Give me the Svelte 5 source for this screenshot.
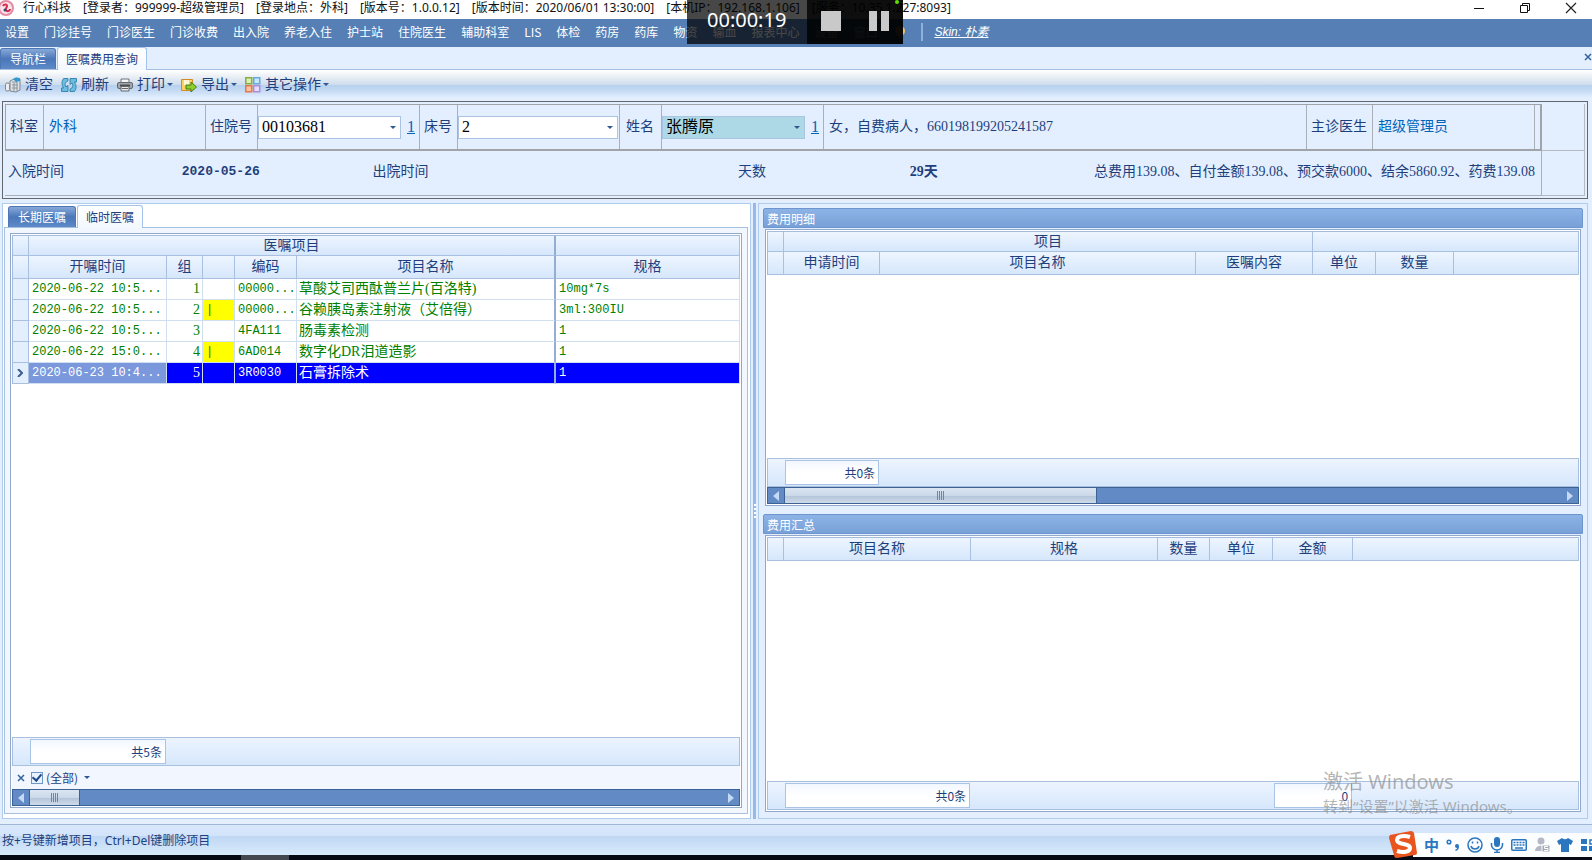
<script lang="ts">
  const windowInfo = [
    '[登录者：999999-超级管理员]',
    '[登录地点：外科]',
    '[版本号：1.0.0.12]',
    '[版本时间：2020/06/01 13:30:00]',
    '[本机IP：192.168.1.106]',
    '[服务：10.35.1.227:8093]',
  ];

  const menu = [
    '设置', '门诊挂号', '门诊医生', '门诊收费', '出入院', '养老入住', '护士站', '住院医生', '辅助科室',
    'LIS', '体检', '药房', '药库', '物资', '输血', '报表中心', '设备', '窗口',
  ];

  const tools = [
    { icon: 'clear', label: '清空', drop: false },
    { icon: 'refresh', label: '刷新', drop: false },
    { icon: 'print', label: '打印', drop: true },
    { icon: 'export', label: '导出', drop: true },
    { icon: 'more', label: '其它操作', drop: true },
  ];

  const orders = [
    { time: '2020-06-22 10:5...', group: 1, mark: '', code: '00000...', name: '草酸艾司西酞普兰片(百洛特)', spec: '10mg*7s' },
    { time: '2020-06-22 10:5...', group: 2, mark: '|', code: '00000...', name: '谷赖胰岛素注射液（艾倍得）', spec: '3ml:300IU' },
    { time: '2020-06-22 10:5...', group: 3, mark: '', code: '4FA111', name: '肠毒素检测', spec: '1' },
    { time: '2020-06-22 15:0...', group: 4, mark: '|', code: '6AD014', name: '数字化DR泪道造影', spec: '1' },
    { time: '2020-06-23 10:4...', group: 5, mark: '', code: '3R0030', name: '石膏拆除术', spec: '1' },
  ];

  let selected = $state(5);
  let filterOn = $state(true);
</script>

{#snippet scrollbar(thumb: number)}
  <div class="scrollbar">
    <button type="button" aria-label="向左滚动">
      <svg width="6" height="10" viewBox="0 0 6 10"><path d="M6 0v10L0 5z" fill="#c4daf6" /></svg>
    </button>
    <div class="track">
      <div class="thumb" style:width="{thumb}%"><i></i></div>
    </div>
    <button type="button" aria-label="向右滚动">
      <svg width="6" height="10" viewBox="0 0 6 10"><path d="M0 0v10L6 5z" fill="#c4daf6" /></svg>
    </button>
  </div>
{/snippet}

<div class="window">
  <header class="titlebar">
    <svg class="logo" width="14" height="16" viewBox="0 0 14 16">
      <circle cx="6" cy="8" r="7" fill="#fbe3ea" stroke="#e48ba5" stroke-width="2" />
      <path d="M3 6c1-2 4-2 4 0s-2 2-1 4 4 1 4-1" fill="none" stroke="#d32f4d" stroke-width="2" />
      <circle cx="5" cy="10" r="1.500" fill="#35477d" />
    </svg>
    <span>行心科技</span>
    {#each windowInfo as info}
      <span>{info}</span>
    {/each}
    <div class="window-buttons">
      <button type="button" aria-label="最小化">
        <svg width="12" height="12" viewBox="0 0 12 12"><path d="M1 6.500h10" stroke="#111" /></svg>
      </button>
      <button type="button" aria-label="还原">
        <svg width="12" height="12" viewBox="0 0 12 12"><path d="M1.500 3.500h7v7h-7zM3.500 3v-1.500h7v7h-1.500" fill="none" stroke="#111" /></svg>
      </button>
      <button type="button" aria-label="关闭">
        <svg width="12" height="12" viewBox="0 0 12 12"><path d="M1 1l10 10M11 1L1 11" stroke="#222" stroke-width="1.200" /></svg>
      </button>
    </div>
  </header>

  <nav class="menubar">
    {#each menu as item}
      <button type="button">{item}</button>
    {/each}
    <svg class="bulb" width="16" height="16" viewBox="0 0 16 16">
      <circle cx="8" cy="7" r="5" fill="#f7c65c" />
      <path d="M6 12h4v3H6z" fill="#8a93a5" />
    </svg>
    <span class="sep"></span>
    <a class="skin" href="#skin">Skin: 朴素</a>
  </nav>

  <div class="tabs main-tabs">
    <button type="button" class="tab">导航栏</button>
    <button type="button" class="tab active">医嘱费用查询</button>
    <button type="button" class="close" aria-label="关闭页签">
      <svg width="8" height="8" viewBox="0 0 8 8"><path d="M1 1l6 6M7 1L1 7" stroke="#33639f" stroke-width="1.500" /></svg>
    </button>
  </div>

  <div class="toolbar">
    {#each tools as tool}
      <button type="button">
        <svg width="16" height="16" viewBox="0 0 16 16">
          {#if tool.icon === 'clear'}
            <path d="M5 4l6-3 4 1v11l-4 2-6-1z" fill="#dce1e6" stroke="#7d858d" />
            <path d="M7 5h5v9M9 6v8M7 8h6M7 11h6" fill="none" stroke="#8c949c" />
            <path d="M8 2l3-1.500L15 1v3l-4 1z" fill="#2f9bd0" />
            <rect x="0.500" y="6" width="4" height="8" rx="1.500" fill="#eee" stroke="#80858a" />
          {:else if tool.icon === 'refresh'}
            <path d="M7 1.500H2.500C.5 4 .5 8 2.500 11H.5v3.500h6.500V8.500L5 10C3.500 7.500 4 5 7 4z" fill="#6cbde2" stroke="#23759f" stroke-width=".8" />
            <path d="M9 14.500h4.500c2-2.500 2-6.500 0-9.500h2V1.500H9v6L11 6c1.500 2.500 1 5-2 6z" fill="#6cbde2" stroke="#23759f" stroke-width=".8" />
          {:else if tool.icon === 'print'}
            <path d="M4 6V2h8v4" fill="#f5f5f5" stroke="#70757a" />
            <rect x=".5" y="5.500" width="15" height="6" rx="1.500" fill="#a3a8ad" stroke="#65696e" />
            <path d="M3 8.500h10" stroke="#4c5055" stroke-width="2" />
            <path d="M4 9.500h8V14H4z" fill="#e8e8e8" stroke="#65696e" />
            <path d="M5 11.500h6" stroke="#65696e" />
          {:else if tool.icon === 'export'}
            <path d="M.5 2.500h11v11H.5z" fill="#fbd264" stroke="#d68b22" />
            <path d="M3 3v5h5V3z" fill="#fff6d6" />
            <path d="M5 8h5V5l5.500 5-5.500 5v-3H5z" fill="#8fce2c" stroke="#3f7f12" />
          {:else}
            <rect x=".75" y=".75" width="6" height="6" fill="#dcefb0" stroke="#86ad48" stroke-width="1.500" />
            <rect x="8.750" y=".75" width="6" height="6" fill="#c9e8fd" stroke="#67a9dd" stroke-width="1.500" />
            <rect x=".75" y="8.750" width="6" height="6" fill="#ffc3a2" stroke="#e47849" stroke-width="1.500" />
            <rect x="8.750" y="8.750" width="6" height="6" fill="#e8dcfb" stroke="#a98fdc" stroke-width="1.500" />
          {/if}
        </svg>
        <span>{tool.label}</span>
        {#if tool.drop}<i class="caret"></i>{/if}
      </button>
    {/each}
  </div>

  <section class="patient">
    <div class="line first">
      <div class="fields">
        <span class="name">科室</span>
        <span class="value link">外科</span>
        <label class="name" for="admission">住院号</label>
        <div class="value edit">
          <div class="combo">
            <select id="admission"><option>00103681</option></select>
            <i class="caret"></i>
          </div>
          <a href="#admission">1</a>
        </div>
        <label class="name" for="bed">床号</label>
        <div class="value edit full">
          <div class="combo">
            <select id="bed"><option>2</option></select>
            <i class="caret"></i>
          </div>
        </div>
        <label class="name roomy" for="patient">姓名</label>
        <div class="value edit">
          <div class="combo current">
            <select id="patient"><option>张腾原</option></select>
            <i class="caret"></i>
          </div>
          <a href="#patient">1</a>
        </div>
        <span class="value grow">女，自费病人，660198199205241587</span>
        <span class="name">主诊医生</span>
        <span class="value link">超级管理员</span>
      </div>
      <div class="tail"></div>
    </div>
    <div class="line">
      <div class="stay">
        <span>入院时间</span>
        <b class="date">2020-05-26</b>
        <span>出院时间</span>
        <span>天数</span>
        <b>29天</b>
        <span class="total">总费用139.08、自付金额139.08、预交款6000、结余5860.92、药费139.08</span>
      </div>
      <div class="tail"></div>
    </div>
  </section>

  <main>
    <section class="orders">
      <div class="tabs">
        <button type="button" class="tab">长期医嘱</button>
        <button type="button" class="tab active">临时医嘱</button>
      </div>
      <div class="page">
        <div class="grid">
          <table>
            <colgroup>
              <col class="w-ind" /><col class="w-time" /><col class="w-group" /><col class="w-mark" /><col class="w-code" /><col class="w-name" /><col />
            </colgroup>
            <thead>
              <tr class="band"><th></th><th colspan="5" class="fixed">医嘱项目</th><th></th></tr>
              <tr><th></th><th>开嘱时间</th><th>组</th><th></th><th>编码</th><th class="fixed">项目名称</th><th>规格</th></tr>
            </thead>
            <tbody>
              {#each orders as row (row.group)}
                <tr class:selected={selected === row.group} onclick={() => (selected = row.group)}>
                  <td class="ind">
                    {#if selected === row.group}
                      <svg width="6" height="8" viewBox="0 0 6 8"><path d="M1 0l4 4-4 4" fill="none" stroke="#3b5f92" stroke-width="2" /></svg>
                    {/if}
                  </td>
                  <td class="code time">{row.time}</td>
                  <td class="num">{row.group}</td>
                  <td class="code" class:yellow={row.mark}>{row.mark}</td>
                  <td class="code">{row.code}</td>
                  <td class="fixed">{row.name}</td>
                  <td class="code">{row.spec}</td>
                </tr>
              {/each}
            </tbody>
          </table>
          <div class="blank"></div>
          <div class="footer">
            <span class="sum s-time">共5条</span>
          </div>
          <div class="filter">
            <button type="button" aria-label="清除筛选">
              <svg width="8" height="8" viewBox="0 0 8 8"><path d="M1 1l6 6M7 1L1 7" stroke="#33639f" stroke-width="1.500" /></svg>
            </button>
            <label><input type="checkbox" bind:checked={filterOn} />(全部)</label>
            <i class="caret"></i>
          </div>
          {@render scrollbar(7.4)}
        </div>
      </div>
    </section>

    <div class="splitter"><i></i><i></i><i></i><i></i></div>

    <section class="fees">
      <div class="group">
        <h2>费用明细</h2>
        <div class="grid">
          <table>
            <colgroup>
              <col class="w-ind" /><col class="w-apply" /><col class="w-item" /><col class="w-content" /><col class="w-unit" /><col class="w-qty" /><col />
            </colgroup>
            <thead>
              <tr class="band"><th></th><th colspan="3">项目</th><th colspan="3"></th></tr>
              <tr><th></th><th>申请时间</th><th>项目名称</th><th>医嘱内容</th><th>单位</th><th>数量</th><th></th></tr>
            </thead>
          </table>
          <div class="blank"></div>
          <div class="footer">
            <span class="sum s-apply">共0条</span>
          </div>
          {@render scrollbar(40.2)}
        </div>
      </div>
      <div class="group">
        <h2>费用汇总</h2>
        <div class="grid">
          <table>
            <colgroup>
              <col class="w-ind" /><col class="w-sum" /><col class="w-sum" /><col class="w-num" /><col class="w-unit" /><col class="w-money" /><col />
            </colgroup>
            <thead>
              <tr><th></th><th>项目名称</th><th>规格</th><th>数量</th><th>单位</th><th>金额</th><th></th></tr>
            </thead>
          </table>
          <div class="blank"></div>
          <div class="footer">
            <span class="sum s-name">共0条</span>
            <span class="s-skip"></span>
            <span class="sum s-money">0</span>
          </div>
        </div>
      </div>
    </section>
  </main>

  <footer class="statusbar">按+号键新增项目，Ctrl+Del键删除项目</footer>
  <div class="taskbar"><i></i></div>

  <div class="recorder">
    <span class="clock">00:00:19</span>
    <button type="button" aria-label="停止"><i class="stop"></i></button>
    <button type="button" aria-label="暂停"><i class="pause"></i></button>
    <i class="live"></i>
  </div>

  <div class="watermark">
    <p class="big">激活 Windows</p>
    <p>转到“设置”以激活 Windows。</p>
  </div>

  <div class="ime">
    <svg class="sogou" width="28" height="28" viewBox="0 0 28 28">
      <path d="M1 5L22 1q2 0 3 2l3 20q0 2-2 2L8 28q-3 0-3-3L0 8q0-2 1-3z" fill="#e9551f" />
      <path d="M21 7C15 5 8 6 8 10c0 5 13 3 13 8 0 4-7 5-13 3" fill="none" stroke="#fff" stroke-width="4" />
    </svg>
    <span class="lang">中</span>
    <svg width="14" height="16" viewBox="0 0 14 16">
      <circle cx="3" cy="5" r="1.800" fill="none" stroke="#2a76bf" stroke-width="1.500" />
      <path d="M11 7a2 2 0 0 1 2 2c0 3-1 4-3 5l-1-1c1-.5 2-1 2-2a2 2 0 0 1 0-4z" fill="#2a76bf" />
    </svg>
    <svg width="16" height="16" viewBox="0 0 16 16">
      <circle cx="8" cy="8" r="7" fill="none" stroke="#2a76bf" stroke-width="1.500" />
      <path d="M4 9c1 4 7 4 8 0M5.500 4.500v2M10.500 4.500v2" fill="none" stroke="#2a76bf" stroke-width="1.500" />
    </svg>
    <svg width="14" height="16" viewBox="0 0 14 16">
      <rect x="4" y="0" width="6" height="10" rx="3" fill="#2a76bf" />
      <path d="M1.500 6v2a5.500 5 0 0 0 11 0V6M7 13v2.500M4 15.500h6" fill="none" stroke="#2a76bf" stroke-width="1.500" />
    </svg>
    <svg width="16" height="14" viewBox="0 0 16 14">
      <rect x=".75" y="1.750" width="14.500" height="10.500" rx="1" fill="none" stroke="#2a76bf" stroke-width="1.500" />
      <path d="M2.500 4.500h11M2.500 7h11" stroke="#2a76bf" stroke-width="1.500" stroke-dasharray="2 1" />
      <path d="M4 10h8" stroke="#2a76bf" stroke-width="1.500" />
    </svg>
    <svg width="16" height="16" viewBox="0 0 16 16">
      <circle cx="7" cy="4" r="3.500" fill="#b5b9c6" />
      <path d="M1 14c0-7 12-7 12 0z" fill="#b5b9c6" />
      <rect x="8" y="8" width="8" height="7" fill="#a5a9b8" stroke="#fff" />
      <path d="M14 9.500h-3.500v2H14v2h-4" fill="none" stroke="#fff" />
    </svg>
    <svg width="16" height="16" viewBox="0 0 16 16">
      <path d="M5 1q3 2.500 6 0l5 3-2 4-2-1v8H4V7L2 8 0 4z" fill="#2a76bf" />
    </svg>
    <svg width="16" height="16" viewBox="0 0 16 16">
      <path d="M1 2h6v5H1zM1 9h6v5H1zM9 9h6v5H9z" fill="#2a76bf" />
      <path d="M10 3h5v4h-5z" fill="none" stroke="#2a76bf" stroke-width="1.500" />
    </svg>
  </div>
</div>

<style>
  :global(body) {
    margin: 0;
    background: #e3efff;
  }

  .window {
    position: relative;
    display: flex;
    flex-direction: column;
    min-height: 100vh;
    overflow: hidden;
    background: #e3efff;
    color: #1e3f7c;
    font-family: 'Liberation Serif', 'Noto Sans CJK SC', serif;
    font-size: 14px;
    line-height: 20px;
    white-space: nowrap;
  }

  .window * {
    box-sizing: border-box;
  }

  button {
    display: flex;
    align-items: center;
    padding: 0;
    border: 0;
    background: none;
    color: inherit;
    font: inherit;
  }

  svg {
    flex: none;
    display: block;
  }

  .caret {
    flex: none;
    width: 0;
    height: 0;
    border: 3px solid transparent;
    border-top-color: #2f5792;
    border-bottom: 0;
  }

  .titlebar,
  .menubar,
  .tabs,
  .statusbar,
  h2,
  .sum,
  .filter {
    font-family: 'Noto Sans CJK SC', sans-serif;
    font-size: 12px;
  }

  .titlebar,
  .statusbar {
    font-family: 'Noto Sans', 'Noto Sans CJK SC', sans-serif;
  }

  .titlebar {
    display: flex;
    align-items: center;
    gap: 12px;
    height: 19px;
    padding-bottom: 3px;
    background: #fff;
    color: #111;
  }

  .logo {
    margin-right: -3px;
  }

  .window-buttons {
    display: flex;
    gap: 34px;
    margin-left: auto;
    padding-right: 15px;
  }

  .menubar {
    display: flex;
    align-items: center;
    gap: 15px;
    height: 28px;
    padding: 0 5px 2px;
    background: #557fb5;
    color: #fff;
  }

  .sep {
    width: 2px;
    height: 18px;
    margin-left: -2px;
    background: #8fb0da;
  }

  .skin {
    margin-left: -4px;
    color: #fff;
    font-family: 'Liberation Sans', 'Noto Sans CJK SC', sans-serif;
    font-style: italic;
  }

  .tabs {
    display: flex;
    align-items: flex-end;
    gap: 1px;
    border-bottom: 1px solid #a5bfe0;
  }

  .tab {
    height: 21px;
    padding: 0 9px;
    border: 1px solid #4d77b4;
    border-bottom: 0;
    border-radius: 3px 3px 0 0;
    background: linear-gradient(#86a9d9, #4b76b8 50%, #5f8ac8);
    color: #fff;
  }

  .tab.active {
    height: 23px;
    margin-bottom: -1px;
    padding: 0 8px;
    border-color: #a5c3ea;
    background: linear-gradient(#fff, #f3f8ff);
    color: #1e3f7c;
  }

  .main-tabs {
    height: 23px;
  }

  .main-tabs .close {
    margin-left: auto;
    padding-bottom: 8px;
  }

  .toolbar {
    display: flex;
    align-items: center;
    gap: 8px;
    height: 28px;
    padding: 1px 5px 0;
    background: linear-gradient(#fff, #eef2f6 20%, #cddcec 53%, #b6d0ee 54%, #c6dbf3 75%, #e3efff);
  }

  .toolbar button {
    gap: 4px;
  }

  .toolbar .caret {
    margin-left: -2px;
  }

  .patient {
    margin: 3px 4px 4px 2px;
    padding: 2px;
    border: 1px solid #63676d;
  }

  .line {
    display: flex;
  }

  .fields {
    flex: 1;
    display: flex;
    height: 47px;
    padding-right: 5px;
    border: 1px solid #a0a4a8;
    border-bottom-width: 2px;
    border-right-width: 2px;
  }

  .fields > * {
    display: flex;
    align-items: center;
    padding-bottom: 2px;
    border-right: 1px solid #a9b0b8;
  }

  .name {
    padding: 0 5px 0 4px;
  }

  .name.roomy {
    padding: 0 7px 0 6px;
  }

  .value {
    width: 162px;
    padding: 0 5px;
  }

  .value.grow {
    flex: 1;
    width: auto;
  }

  .value.edit {
    gap: 6px;
    padding: 0 4px 0 0;
  }

  .value.full {
    padding-right: 1px;
  }

  .link,
  .edit a {
    color: #0064b9;
  }

  .edit a {
    font-size: 16px;
  }

  .combo {
    flex: 1;
    display: flex;
    align-items: center;
    height: 23px;
    padding-right: 4px;
    border: 1px solid #abc4e4;
    background: #fff;
  }

  .combo select {
    flex: 1;
    appearance: none;
    min-width: 0;
    padding: 0 3px;
    border: 0;
    background: none;
    color: #000;
    font: inherit;
    font-size: 16px;
  }

  .combo.current {
    background: #add8e6;
  }

  .tail {
    width: 43px;
    border: 1px solid #b3bac2;
    border-width: 0 1px 1px 0;
  }

  .stay {
    flex: 1;
    display: grid;
    grid-template-columns: 174fr 191fr 366fr 172fr 170fr 456fr;
    align-items: center;
    height: 45px;
    padding: 0 6px 2px 3px;
    border: 1px solid #a9b0b8;
    border-width: 0 1px 1px 0;
  }

  .date {
    font-family: 'Liberation Mono', monospace;
    font-size: 13px;
  }

  .total {
    text-align: right;
  }

  main {
    flex: 1;
    display: grid;
    grid-template-columns: 750fr 3px 831fr;
    gap: 2px;
    padding: 0 4px 5px 2px;
  }

  .orders,
  .fees {
    display: flex;
    flex-direction: column;
    border: 1px solid #b0ccec;
    min-width: 0;
  }

  .orders {
    padding: 0 2px 4px 1px;
    background: #fff;
  }

  .orders .tabs {
    height: 24px;
    padding-left: 4px;
  }

  .page {
    flex: 1;
    display: flex;
    padding: 5px;
    border: 1px solid #a8bfdd;
    border-top: 0;
    background: #f1f6ff;
  }

  .grid {
    flex: 1;
    display: flex;
    flex-direction: column;
    min-width: 0;
    padding: 1px;
    border: 1px solid #8fa8cc;
    background: #fff;
  }

  table {
    width: 100%;
    table-layout: fixed;
    border-spacing: 0;
    border-top: 1px solid #a5bbdb;
    border-left: 1px solid #a5bbdb;
  }

  th {
    height: 23px;
    padding: 0;
    border: 1px solid #a9c0e0;
    border-width: 0 1px 1px 0;
    background: linear-gradient(#edf5ff, #d6e7fb);
    font-weight: 400;
    line-height: 20px;
  }

  .band th {
    height: 20px;
    line-height: 18px;
  }

  td {
    height: 21px;
    padding: 0 2px;
    overflow: hidden;
    border: 1px solid #cfdff0;
    border-width: 0 1px 1px 0;
    color: #008000;
    line-height: 20px;
  }

  .code {
    padding: 0 3px;
    font-family: 'Liberation Mono', monospace;
    font-size: 12px;
  }

  .num {
    text-align: right;
  }

  .fixed {
    border-right: 2px solid #93aed2;
  }

  td.yellow {
    background: #ff0;
  }

  td.ind {
    padding: 0 4px;
    border-color: #a9c0e0;
    background: #e3effd;
  }

  .selected td:not(.ind) {
    background: #00f;
    color: #fff;
  }

  .selected td.time:not(.ind) {
    background: #7b98dc;
  }

  .w-ind { width: 16px; }
  .w-time { width: 138px; }
  .w-group { width: 36px; }
  .w-mark { width: 32px; }
  .w-code { width: 62px; }
  .w-name { width: 259px; }
  .w-apply { width: 96px; }
  .w-item { width: 316px; }
  .w-content { width: 117px; }
  .w-unit { width: 63px; }
  .w-qty { width: 78px; }
  .w-sum { width: 187px; }
  .w-num { width: 52px; }
  .w-money { width: 80px; }

  /* summary boxes sit 1px inside their column */
  .s-time { width: 136px; }
  .s-apply { width: 94px; }
  .s-name { width: 185px; }
  .s-skip { width: 304px; }
  .s-money { width: 78px; }

  .blank {
    flex: 1;
  }

  .footer {
    display: flex;
    height: 29px;
    padding: 1px 0 1px 17px;
    border: 1px solid #a9c0dc;
    background: linear-gradient(#edf4ff, #d6e7fc);
  }

  .sum {
    padding: 2px 3px;
    border: 1px solid #a9c4e4;
    background: linear-gradient(#f2f7ff, #fff 50%);
    text-align: right;
  }

  .filter {
    display: flex;
    align-items: center;
    gap: 6px;
    height: 23px;
    padding-left: 5px;
    background: #f1f6ff;
  }

  .filter label {
    display: flex;
    align-items: center;
    gap: 3px;
  }

  .filter input {
    appearance: none;
    display: grid;
    place-items: center;
    width: 12px;
    height: 12px;
    margin: 0;
    border: 1px solid #6f96c8;
    background: #e9f2ff;
  }

  .filter input:checked::before {
    content: '';
    width: 4px;
    height: 7px;
    border: solid #1f4a8a;
    border-width: 0 2px 2px 0;
    transform: translateY(-1px) rotate(40deg);
  }

  .scrollbar {
    display: flex;
    height: 17px;
    border: 1px solid #3c6194;
    background: #628bc5;
  }

  .scrollbar button {
    justify-content: center;
    width: 16px;
  }

  .track {
    flex: 1;
    display: flex;
  }

  .thumb {
    display: grid;
    place-items: center;
    border: 1px solid #3c6194;
    border-width: 0 1px;
    background: linear-gradient(#dbe5f2, #cbd9e9 50%, #b5c6da 55%, #cddaea);
  }

  .thumb i {
    width: 7px;
    height: 9px;
    background: repeating-linear-gradient(90deg, #6a86ab 0 1px, transparent 1px 2px);
  }

  .splitter {
    display: flex;
    flex-direction: column;
    align-items: center;
    justify-content: center;
    gap: 2px;
    background: #97b9e9;
  }

  .splitter i {
    width: 2px;
    height: 2px;
    background: #fff;
  }

  .fees {
    gap: 6px;
    padding: 4px;
  }

  .group {
    flex: 1;
    display: flex;
    flex-direction: column;
  }

  .group .grid {
    margin: 1px 2px 2px;
  }

  h2 {
    height: 20px;
    margin: 0;
    padding: 0 3px;
    border: 1px solid #6e95cd;
    border-radius: 2px 2px 0 0;
    background: linear-gradient(#8db3e6, #78a1d8);
    color: #fff;
    font-weight: 400;
  }

  .statusbar {
    height: 31px;
    padding: 6px 2px;
    border-top: 1px solid #9db7d8;
    background: linear-gradient(#d9e7fb, #d3e3fa 35%, #bfd7f4 36%, #d8ebfb);
  }

  .taskbar {
    display: flex;
    height: 5px;
    background: #050a14;
  }

  .taskbar i {
    width: 48px;
    margin-left: 241px;
    background: #444950;
  }

  .recorder {
    position: absolute;
    top: 0;
    left: 687px;
    display: flex;
    height: 44px;
    background: rgba(0, 0, 0, 0.72);
    color: #fff;
    font-family: 'Noto Sans', sans-serif;
    font-size: 20px;
  }

  .clock {
    width: 120px;
    padding-left: 20px;
    line-height: 40px;
  }

  .recorder button {
    justify-content: center;
    width: 48px;
    padding-bottom: 2px;
    background: rgba(0, 0, 0, 0.8);
  }

  .stop {
    width: 20px;
    height: 20px;
    background: #c9c9c9;
  }

  .pause {
    width: 20px;
    height: 20px;
    border: solid #c9c9c9;
    border-width: 0 8px;
  }

  .live {
    position: absolute;
    top: 0;
    right: 4px;
    width: 4px;
    height: 4px;
    border-radius: 50%;
    background: #5fe000;
  }

  .watermark {
    position: absolute;
    right: 70px;
    bottom: 44px;
    width: 199px;
    color: rgba(130, 130, 130, 0.6);
    font-family: 'Noto Sans', 'Noto Sans CJK SC', sans-serif;
    font-size: 15px;
    pointer-events: none;
  }

  .watermark p {
    margin: 0;
  }

  .watermark .big {
    font-size: 20px;
    line-height: 28px;
  }

  .ime {
    position: absolute;
    right: -4px;
    bottom: 3px;
    display: flex;
    align-items: center;
    gap: 7px;
    height: 24px;
    background: linear-gradient(90deg, transparent 24px, #fbfdff 24px);
    color: #2a76bf;
  }

  .sogou {
    margin-top: -3px;
  }

  .lang {
    font-family: 'Noto Sans CJK SC', sans-serif;
    font-size: 15px;
    font-weight: 700;
  }
</style>
